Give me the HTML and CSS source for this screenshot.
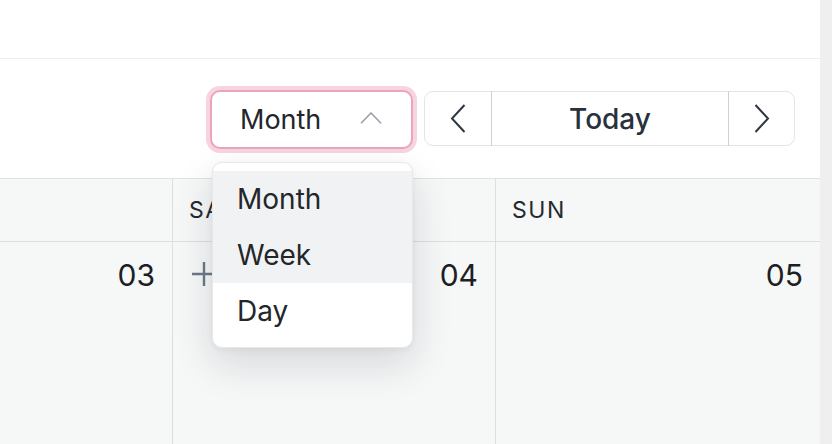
FILE: index.html
```html
<!DOCTYPE html>
<html lang="en">
<head>
<meta charset="utf-8">
<title>Calendar</title>
<link rel="stylesheet" href="styles.css">
</head>
<body>
<div class="page">
  <main class="main">
    <div class="topbar"></div>
    <div class="toolbar">
      <div class="view-select">
        <button class="select-box" type="button">
          <span class="select-label">Month</span>
          <svg class="select-chevron" width="22" height="12" viewBox="0 0 22 12"><polyline points="1,11.2 11,1 21,11.2" fill="none" stroke="#9aa1a9" stroke-width="1.6"/></svg>
        </button>
        <ul class="menu">
          <li class="menu-item is-active">Month</li>
          <li class="menu-item is-hover">Week</li>
          <li class="menu-item">Day</li>
        </ul>
      </div>
      <div class="nav-group">
        <button class="nav-btn nav-arrow" type="button" aria-label="Previous">
          <svg width="16" height="30" viewBox="0 0 16 30"><polyline points="14.5,1 2,14.5 14.5,28" fill="none" stroke="#2e3742" stroke-width="2"/></svg>
        </button>
        <span class="nav-divider"></span>
        <button class="nav-btn nav-today" type="button">Today</button>
        <span class="nav-divider"></span>
        <button class="nav-btn nav-arrow" type="button" aria-label="Next">
          <svg width="16" height="30" viewBox="0 0 16 30"><polyline points="1.5,1 14,14.5 1.5,28" fill="none" stroke="#2e3742" stroke-width="2"/></svg>
        </button>
      </div>
    </div>
    <div class="calendar">
      <div class="cal-grid">
        <div class="cal-head"></div>
        <div class="cal-head">SAT</div>
        <div class="cal-head">SUN</div>
        <div class="cal-cell"><span class="date">03</span></div>
        <div class="cal-cell">
          <svg class="add-icon" width="24" height="24" viewBox="0 0 24 24"><path d="M12 0V24M0 12H24" fill="none" stroke="#6c7985" stroke-width="2.4"/></svg>
          <span class="date">04</span>
        </div>
        <div class="cal-cell"><span class="date">05</span></div>
      </div>
    </div>
  </main>
  <div class="side-strip"></div>
</div>
</body>
</html>
```

FILE: styles.css
```css
* { box-sizing: border-box; }

html, body {
  margin: 0;
  height: 100%;
}

body {
  font-family: Inter, "Noto Sans", "Liberation Sans", sans-serif;
  color: #1f2328;
  background: #ffffff;
}

.page {
  display: flex;
  height: 444px;
  overflow: hidden;
}

.main {
  width: 820px;
  display: flex;
  flex-direction: column;
  background: #ffffff;
}

.side-strip {
  flex: 1;
  background: #efefef;
}

.topbar {
  height: 59px;
  border-bottom: 1px solid #ededed;
}

.toolbar {
  height: 119px;
  display: flex;
  align-items: center;
  justify-content: flex-end;
  gap: 11px;
  padding-right: 25px;
}

.view-select {
  position: relative;
  z-index: 5;
}

.select-box {
  width: 203px;
  height: 59px;
  margin-top: 1px;
  display: flex;
  align-items: center;
  justify-content: space-between;
  padding: 0 29px 0 28px;
  background: #ffffff;
  border: 2px solid #eba5ba;
  border-radius: 10px;
  box-shadow: 0 0 0 4px #f8d4df;
  font-family: inherit;
  font-size: 27px;
  color: #22262b;
  cursor: pointer;
}

.select-label {
  line-height: 1;
}

.select-chevron {
  display: block;
  margin-bottom: 3px;
}

.menu {
  position: absolute;
  top: calc(100% + 13px);
  left: 2px;
  width: 201px;
  margin: 0;
  padding: 8px 0;
  list-style: none;
  background: #ffffff;
  border: 1px solid #e8e8ea;
  border-radius: 10px;
  box-shadow: 0 16px 40px rgba(20, 30, 40, 0.14), 0 2px 6px rgba(20, 30, 40, 0.05);
}

.menu-item {
  height: 56px;
  display: flex;
  align-items: center;
  padding-left: 24px;
  font-size: 28px;
  color: #23262a;
}

.menu-item.is-active,
.menu-item.is-hover {
  background: #f1f2f4;
}

.nav-group {
  display: flex;
  height: 55px;
  border: 1px solid #e3e4e6;
  border-radius: 9px;
  background: #ffffff;
}

.nav-btn {
  border: 0;
  background: transparent;
  padding: 0;
  font-family: inherit;
  display: flex;
  align-items: center;
  justify-content: center;
  cursor: pointer;
}

.nav-arrow {
  width: 66px;
}

.nav-arrow:last-child {
  width: 65px;
}

.nav-arrow svg {
  display: block;
}

.nav-today {
  width: 236px;
  font-size: 28px;
  font-weight: 500;
  color: #28313c;
}

.nav-divider {
  width: 1px;
  margin: -1px 0;
  background: #cdd0d4;
}

.calendar {
  flex: 1;
  border-top: 1px solid #dfe1e3;
  background: #f6f7f7;
  overflow: hidden;
}

.cal-grid {
  display: grid;
  grid-template-columns: 323px 323px 325px;
  grid-template-rows: 63px 1fr;
  height: 100%;
  margin-left: -151px;
}

.cal-head {
  display: flex;
  align-items: center;
  padding-left: 16px;
  border-left: 1px solid #dcdee1;
  border-bottom: 1px solid #dcdee1;
  font-size: 23px;
  letter-spacing: 1.6px;
  color: #262a2f;
}

.cal-cell {
  display: flex;
  align-items: flex-start;
  justify-content: space-between;
  padding: 15px 17px 0 19px;
  border-left: 1px solid #dcdee1;
}

.date {
  margin-left: auto;
  font-size: 30px;
  line-height: 36px;
  color: #1c2024;
}

.add-icon {
  display: block;
  margin-top: 5px;
}
```
